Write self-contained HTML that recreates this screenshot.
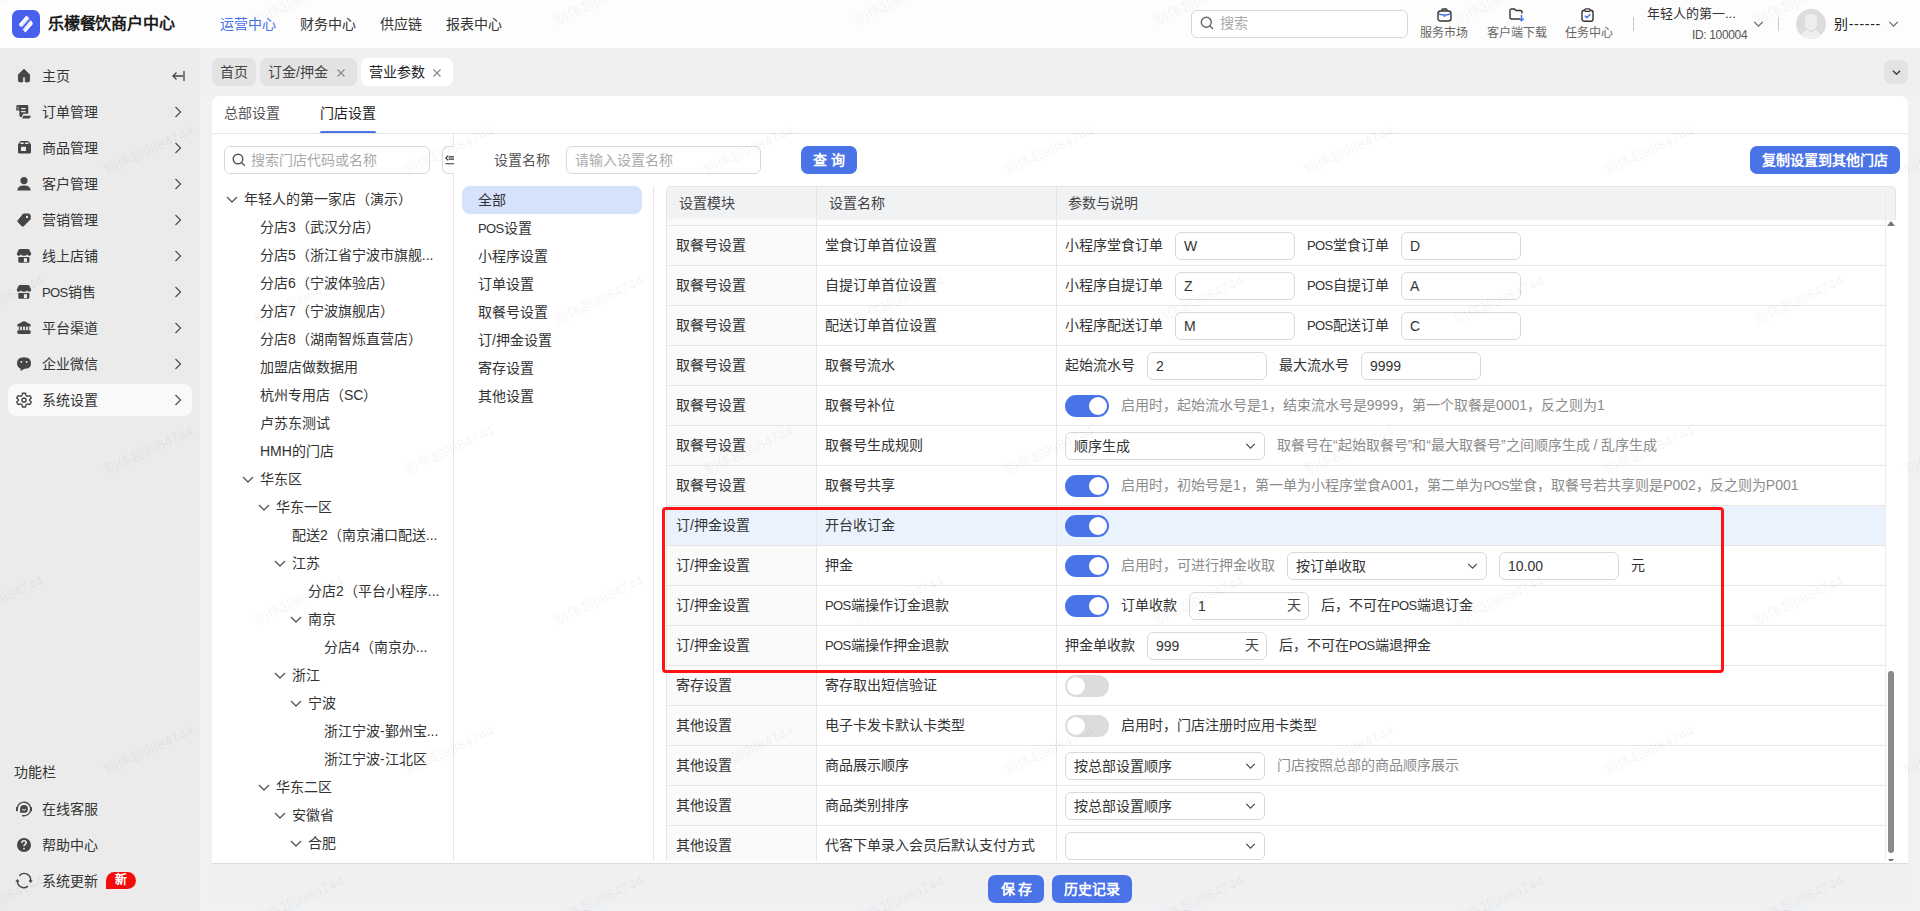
<!DOCTYPE html><html lang="zh-CN"><head><meta charset="utf-8"><style>
*{box-sizing:border-box;margin:0;padding:0}
svg{display:block}
html,body{width:1920px;height:911px;overflow:hidden}
body{position:relative;background:#f0f1f3;font-family:"Liberation Sans",sans-serif;font-size:14px;color:#333;}
.abs{position:absolute}
.t{position:absolute;white-space:nowrap;line-height:20px}
#hdr{position:absolute;left:0;top:0;width:1920px;height:48px;background:#fdfdfd}
#side{position:absolute;left:0;top:48px;width:200px;height:863px;background:#ebebeb}
.sitem{position:absolute;left:0;width:200px;height:32px}
.sitem .ic{position:absolute;left:16px;top:8px;width:16px;height:16px}
.sitem .tx{position:absolute;left:42px;top:6px;line-height:20px;font-size:14px;color:#333;font-weight:500}
.sitem .ch{position:absolute;left:174px;top:10px}
#card{position:absolute;left:212px;top:96px;width:1696px;height:767px;background:#fff;border-radius:8px 8px 0 0;overflow:hidden}
.inp{position:absolute;height:28px;border:1px solid #d9d9d9;border-radius:6px;background:#fff;font-size:14px;line-height:26px;padding-left:8px;color:#333}
.btn{position:absolute;height:28px;border-radius:7px;background:#4a73e8;color:#fff;font-size:14px;line-height:28px;text-align:center;font-weight:700}
.tw{position:absolute;left:0;width:44px;height:22px;border-radius:11px;background:#4a73e8}
.tw::after{content:"";position:absolute;left:24px;top:2px;width:18px;height:18px;border-radius:50%;background:#fff}
.tw.off{background:#dcdcdc}
.tw.off::after{left:2px}
.row{position:absolute;left:0;width:1219px;height:40px;border-bottom:1px solid #e8e8e8}
.c1{position:absolute;left:0;top:0;width:150px;height:40px;background:#fafafa;border-right:1px solid #e8e8e8}
.c2{position:absolute;left:150px;top:0;width:240px;height:40px;border-right:1px solid #e8e8e8}
.ctx{position:absolute;top:9px;line-height:20px;white-space:nowrap;color:#333}
.gray{color:#8c8c8c}
.tree{position:absolute;white-space:nowrap;line-height:20px;color:#333}
.cat{position:absolute;left:16px;line-height:20px;color:#333}
.wm{position:absolute;white-space:nowrap;font-size:14px;line-height:16px;font-weight:500;color:rgba(0,0,0,0.06);transform:translate(-50%,-50%) rotate(-25deg);pointer-events:none;z-index:50}

</style></head><body>
<div id="hdr">
<svg class="abs" style="left:12px;top:10px" width="28" height="28" viewBox="0 0 28 28"><rect width="28" height="28" rx="6.5" fill="#4761ee"/><defs><linearGradient id="lg1" x1="0" y1="0" x2="1" y2="1"><stop offset="0.45" stop-color="#fff"/><stop offset="1" stop-color="#fff" stop-opacity="0.2"/></linearGradient><linearGradient id="lg2" x1="1" y1="1" x2="0" y2="0"><stop offset="0.45" stop-color="#fff"/><stop offset="1" stop-color="#fff" stop-opacity="0.2"/></linearGradient></defs><path d="M14.4 5.4 L17.6 8.6 L10 17.3 Q7.4 16.6 6.9 14.3 Z" fill="url(#lg1)"/><path d="M18.4 10 Q20.6 11.6 20.9 14 L13.4 22.6 L10.6 19.6 Z" fill="url(#lg2)"/></svg>
<div class="t" style="left:48px;top:14px;font-size:16px;font-weight:700;color:#1a1a1a;letter-spacing:-0.2px">乐檬餐饮商户中心</div>
<div class="t" style="left:220px;top:14px;color:#4a73e8;font-weight:500">运营中心</div>
<div class="t" style="left:300px;top:14px;color:#333;font-weight:500">财务中心</div>
<div class="t" style="left:380px;top:14px;color:#333;font-weight:500">供应链</div>
<div class="t" style="left:446px;top:14px;color:#333;font-weight:500">报表中心</div>
<div class="abs" style="left:1191px;top:10px;width:217px;height:28px;border:1px solid #d9d9d9;border-radius:6px;background:#fff"></div>
<svg class="abs" style="left:1200px;top:16px" width="14" height="14" viewBox="0 0 14 14"><circle cx="6.3" cy="6.3" r="5" fill="none" stroke="#666" stroke-width="1.4"/><path d="M9.8 9.8 L13 13" stroke="#666" stroke-width="1.5"/></svg>
<div class="t" style="left:1220px;top:13px;color:#aaa">搜索</div>
<svg class="abs" style="left:1437px;top:8px" width="15" height="14" viewBox="0 0 15 14"><rect x="1" y="3" width="13" height="10" rx="2.5" fill="none" stroke="#333" stroke-width="1.4"/><path d="M5 3 V2 Q5 1 6 1 H9 Q10 1 10 2 V3" fill="none" stroke="#333" stroke-width="1.4"/><path d="M2 6 Q7.5 8 13 6" fill="none" stroke="#4a73e8" stroke-width="1.5"/><path d="M7.5 7 V9" stroke="#4a73e8" stroke-width="1.5"/></svg>
<div class="t" style="left:1420px;top:23px;font-size:12px;color:#666">服务市场</div>
<svg class="abs" style="left:1509px;top:8px" width="16" height="14" viewBox="0 0 16 14"><path d="M11 11 H2.5 Q1 11 1 9.5 V2.5 Q1 1 2.5 1 H5.5 L7 2.5 H11.5 Q13 2.5 13 4 V5.5" fill="none" stroke="#333" stroke-width="1.4"/><path d="M12.5 7 V12.5 M10.3 10.5 L12.5 12.7 L14.7 10.5" fill="none" stroke="#4a73e8" stroke-width="1.5"/></svg>
<div class="t" style="left:1487px;top:23px;font-size:12px;color:#666">客户端下载</div>
<svg class="abs" style="left:1581px;top:8px" width="13" height="14" viewBox="0 0 13 14"><rect x="1" y="2.3" width="11" height="11" rx="2.3" fill="none" stroke="#333" stroke-width="1.4"/><rect x="3.8" y="0.8" width="5.4" height="2.6" rx="1.2" fill="#fff" stroke="#333" stroke-width="1.3"/><path d="M3.8 7.8 L5.8 9.6 L9.3 6.2" fill="none" stroke="#4a73e8" stroke-width="1.5"/></svg>
<div class="t" style="left:1565px;top:23px;font-size:12px;color:#666">任务中心</div>
<div class="abs" style="left:1633px;top:17px;width:1px;height:14px;background:#ccc"></div>
<div class="t" style="left:1647px;top:4px;font-size:13px;color:#333">年轻人的第一...</div>
<div class="t" style="left:1692px;top:25px;font-size:12px;color:#555;letter-spacing:-0.35px">ID: 100004</div>
<div class="abs" style="left:1753px;top:21px"><svg width="11" height="6" viewBox="0 0 12 7"><path d="M1 1 L6 6 L11 1" fill="none" stroke="#666" stroke-width="1.3"/></svg></div>
<div class="abs" style="left:1778px;top:17px;width:1px;height:14px;background:#ccc"></div>
<svg class="abs" style="left:1796px;top:9px" width="30" height="30" viewBox="0 0 30 30"><circle cx="15" cy="15" r="15" fill="#dcdcdc"/><path d="M9 9 Q9 5 15 5 Q21 5 21 9 V15 Q21 21 15 21 Q9 21 9 15 Z" fill="#eeeeee"/><path d="M5 26 Q8 21 12 21 L15 24 L18 21 Q22 21 25 26 Q20 30 15 30 Q10 30 5 26 Z" fill="#eeeeee"/></svg>
<div class="t" style="left:1834px;top:14px;color:#222;letter-spacing:0.7px">别------</div>
<div class="abs" style="left:1888px;top:21px"><svg width="11" height="6" viewBox="0 0 12 7"><path d="M1 1 L6 6 L11 1" fill="none" stroke="#666" stroke-width="1.3"/></svg></div>
</div>
<div id="side">
<div class="sitem" style="top:12px;">
<svg class="abs" style="left:12px;top:4px" width="24" height="24" viewBox="0 0 24 24"><path d="M12 5.2 L17.6 10.5 V16.4 Q17.6 17.9 16.1 17.9 H13.2 V13.4 Q13.2 12.9 12.7 12.9 H11.3 Q10.8 12.9 10.8 13.4 V17.9 H7.9 Q6.4 17.9 6.4 16.4 V10.5 Z" fill="#454545" stroke="#454545" stroke-width="0.8" stroke-linejoin="round"/></svg>
<div class="tx" style="left:42px">主页</div>
<svg class="abs" style="left:171px;top:9px" width="14" height="14" viewBox="0 0 14 14"><path d="M13 2 V12 M12 7 H2 M5.5 3.5 L2 7 L5.5 10.5" fill="none" stroke="#444" stroke-width="1.3"/></svg>
</div>
<div class="sitem" style="top:48px;">
<svg class="abs" style="left:12px;top:4px" width="24" height="24" viewBox="0 0 24 24"><path d="M5.6 5 H15 Q16.3 5 16.3 6.3 V13.7 H11.2 L9.6 17.2 Q7.4 17.2 7.4 15.2 V10.6 H4.3 V6.3 Q4.3 5 5.6 5 Z" fill="#454545"/><rect x="5.4" y="6.3" width="1.3" height="3.2" fill="#9a9a9a"/><rect x="9" y="7.9" width="4.7" height="1.3" rx="0.6" fill="#ebebeb"/><rect x="9" y="11" width="4.7" height="1.3" rx="0.6" fill="#ebebeb"/><path d="M11.4 15.8 H19 L18.2 17.6 Q17.9 18.4 17 18.4 H10.2 Z" fill="#454545"/></svg>
<div class="tx" style="left:42px">订单管理</div>
<div class="ch" style="left:174px"><svg width="8" height="12" viewBox="0 0 8 12"><path d="M1.5 1 L6.5 6 L1.5 11" fill="none" stroke="#555" stroke-width="1.3"/></svg></div>
</div>
<div class="sitem" style="top:84px;">
<svg class="abs" style="left:12px;top:4px" width="24" height="24" viewBox="0 0 24 24"><path d="M8.6 5 H15.4 Q16.4 5 17 6 L19 8.2 V16.1 Q19 17.6 17.5 17.6 H7.5 Q6 17.6 6 16.1 V8.2 L7.9 6 Q8.3 5 8.6 5 Z" fill="#454545"/><rect x="8.2" y="6.5" width="3.7" height="1.4" rx="0.7" fill="#ebebeb"/><rect x="12.9" y="6.5" width="3.7" height="1.4" rx="0.7" fill="#ebebeb"/><rect x="9" y="10.8" width="5" height="4.2" rx="0.6" fill="#ebebeb"/></svg>
<div class="tx" style="left:42px">商品管理</div>
<div class="ch" style="left:174px"><svg width="8" height="12" viewBox="0 0 8 12"><path d="M1.5 1 L6.5 6 L1.5 11" fill="none" stroke="#555" stroke-width="1.3"/></svg></div>
</div>
<div class="sitem" style="top:120px;">
<svg class="abs" style="left:12px;top:4px" width="24" height="24" viewBox="0 0 24 24"><circle cx="12" cy="8.6" r="3.6" fill="#454545"/><path d="M5.4 18.6 Q5.4 13.4 12 13.4 Q18.6 13.4 18.6 18.6 Z" fill="#454545"/></svg>
<div class="tx" style="left:42px">客户管理</div>
<div class="ch" style="left:174px"><svg width="8" height="12" viewBox="0 0 8 12"><path d="M1.5 1 L6.5 6 L1.5 11" fill="none" stroke="#555" stroke-width="1.3"/></svg></div>
</div>
<div class="sitem" style="top:156px;">
<svg class="abs" style="left:12px;top:4px" width="24" height="24" viewBox="0 0 24 24"><path d="M11.3 6 H16.5 Q18.2 6 18.2 7.7 V11.2 L11.6 17.9 Q10.8 18.6 10 17.9 L6.2 14.1 Q5.4 13.3 6.1 12.5 Z" fill="#454545" stroke="#454545" stroke-width="1" stroke-linejoin="round"/><rect x="14" y="7.9" width="2" height="2.1" fill="#ebebeb"/></svg>
<div class="tx" style="left:42px">营销管理</div>
<div class="ch" style="left:174px"><svg width="8" height="12" viewBox="0 0 8 12"><path d="M1.5 1 L6.5 6 L1.5 11" fill="none" stroke="#555" stroke-width="1.3"/></svg></div>
</div>
<div class="sitem" style="top:192px;">
<svg class="abs" style="left:12px;top:4px" width="24" height="24" viewBox="0 0 24 24"><path d="M8 5 H16 Q17 5 17.5 6 L19.2 9.8 Q19.3 11.7 17.4 11.7 Q15.6 11.7 15.1 10.2 Q14.5 11.7 12 11.7 Q9.5 11.7 8.9 10.2 Q8.4 11.7 6.6 11.7 Q4.7 11.7 4.8 9.8 L6.5 6 Q7 5 8 5 Z" fill="#454545"/><path d="M6.3 12.9 H17.4 V17.2 Q17.4 18.7 15.9 18.7 H7.8 Q6.3 18.7 6.3 17.2 Z" fill="#454545"/><rect x="11.9" y="14.2" width="3.1" height="3.9" fill="#ebebeb"/></svg>
<div class="tx" style="left:42px">线上店铺</div>
<div class="ch" style="left:174px"><svg width="8" height="12" viewBox="0 0 8 12"><path d="M1.5 1 L6.5 6 L1.5 11" fill="none" stroke="#555" stroke-width="1.3"/></svg></div>
</div>
<div class="sitem" style="top:228px;">
<svg class="abs" style="left:12px;top:4px" width="24" height="24" viewBox="0 0 24 24"><path d="M8 5 H16 Q17 5 17.5 6 L19.2 9.8 Q19.3 11.7 17.4 11.7 Q15.6 11.7 15.1 10.2 Q14.5 11.7 12 11.7 Q9.5 11.7 8.9 10.2 Q8.4 11.7 6.6 11.7 Q4.7 11.7 4.8 9.8 L6.5 6 Q7 5 8 5 Z" fill="#454545"/><path d="M6.3 12.9 H17.4 V17.2 Q17.4 18.7 15.9 18.7 H7.8 Q6.3 18.7 6.3 17.2 Z" fill="#454545"/><rect x="11.9" y="14.2" width="3.1" height="3.9" fill="#ebebeb"/></svg>
<div class="tx" style="left:42px"><span style="font-size:13px;letter-spacing:-0.6px">POS</span>销售</div>
<div class="ch" style="left:174px"><svg width="8" height="12" viewBox="0 0 8 12"><path d="M1.5 1 L6.5 6 L1.5 11" fill="none" stroke="#555" stroke-width="1.3"/></svg></div>
</div>
<div class="sitem" style="top:264px;">
<svg class="abs" style="left:12px;top:4px" width="24" height="24" viewBox="0 0 24 24"><path d="M12 5 L18.3 8.3 Q18.6 8.5 18.6 9 V10.6 H5.4 V9 Q5.4 8.5 5.7 8.3 Z" fill="#454545"/><rect x="6.9" y="10.4" width="10.2" height="4" fill="#454545"/><rect x="7.9" y="10.9" width="2.1" height="3.3" fill="#dcdcdc"/><rect x="11" y="10.9" width="2.1" height="3.3" fill="#dcdcdc"/><rect x="14" y="10.9" width="2.1" height="3.3" fill="#dcdcdc"/><rect x="5.3" y="14.2" width="13.4" height="3.7" rx="1.4" fill="#454545"/></svg>
<div class="tx" style="left:42px">平台渠道</div>
<div class="ch" style="left:174px"><svg width="8" height="12" viewBox="0 0 8 12"><path d="M1.5 1 L6.5 6 L1.5 11" fill="none" stroke="#555" stroke-width="1.3"/></svg></div>
</div>
<div class="sitem" style="top:300px;">
<svg class="abs" style="left:12px;top:4px" width="24" height="24" viewBox="0 0 24 24"><path d="M12 5.2 Q19 5.2 19 11.2 Q19 16.8 12.5 16.8 L8.6 18.9 L8.5 16.4 Q5 15.3 5 11.2 Q5 5.2 12 5.2 Z" fill="#454545"/><circle cx="9.4" cy="10" r="0.9" fill="#ebebeb"/><circle cx="14.6" cy="10" r="0.9" fill="#ebebeb"/></svg>
<div class="tx" style="left:42px">企业微信</div>
<div class="ch" style="left:174px"><svg width="8" height="12" viewBox="0 0 8 12"><path d="M1.5 1 L6.5 6 L1.5 11" fill="none" stroke="#555" stroke-width="1.3"/></svg></div>
</div>
<div class="sitem" style="top:336px;background:#f9f9f9;border-radius:8px;left:8px;width:184px;">
<svg class="abs" style="left:4px;top:4px" width="24" height="24" viewBox="0 0 24 24"><path d="M10.6 5.2 H13.4 L13.9 7.4 L15.7 8.4 L17.9 7.7 L19.3 10.1 L17.6 11.6 V12.6 L19.3 14.1 L17.9 16.5 L15.7 15.8 L13.9 16.8 L13.4 19 H10.6 L10.1 16.8 L8.3 15.8 L6.1 16.5 L4.7 14.1 L6.4 12.6 V11.6 L4.7 10.1 L6.1 7.7 L8.3 8.4 L10.1 7.4 Z" fill="none" stroke="#454545" stroke-width="1.4" stroke-linejoin="round"/><circle cx="12" cy="12.1" r="2.1" fill="none" stroke="#454545" stroke-width="1.4"/></svg>
<div class="tx" style="left:34px">系统设置</div>
<div class="ch" style="left:166px"><svg width="8" height="12" viewBox="0 0 8 12"><path d="M1.5 1 L6.5 6 L1.5 11" fill="none" stroke="#555" stroke-width="1.3"/></svg></div>
</div>
<div class="t" style="left:14px;top:714px;color:#333;font-weight:500">功能栏</div>
<div class="sitem" style="top:745px">
<svg class="abs" style="left:12px;top:4px" width="24" height="24" viewBox="0 0 24 24"><path d="M5.2 11.2 A6.8 6.8 0 1 1 10.2 18.5" fill="none" stroke="#454545" stroke-width="1.4"/><rect x="4" y="10" width="1.9" height="4.2" rx="0.6" fill="#454545"/><rect x="18.1" y="10" width="1.9" height="4.2" rx="0.6" fill="#454545"/><path d="M12 8 A3.9 3.9 0 1 1 12 15.8 H8.1 V11.9 A3.9 3.9 0 0 1 12 8 Z" fill="#454545"/><path d="M10.2 12 Q12 14.3 13.8 12" fill="none" stroke="#ebebeb" stroke-width="1.2"/></svg>
<div class="tx">在线客服</div>
</div>
<div class="sitem" style="top:781px">
<svg class="abs" style="left:12px;top:4px" width="24" height="24" viewBox="0 0 24 24"><circle cx="12" cy="12" r="7" fill="#454545"/><path d="M9.8 10 Q9.8 7.8 12 7.8 Q14.2 7.8 14.2 9.8 Q14.2 11 12.8 11.6 Q12 12 12 13.3" fill="none" stroke="#ebebeb" stroke-width="1.6"/><circle cx="12" cy="15.6" r="0.95" fill="#ebebeb"/></svg>
<div class="tx">帮助中心</div>
</div>
<div class="sitem" style="top:817px">
<svg class="abs" style="left:12px;top:4px" width="24" height="24" viewBox="0 0 24 24"><path d="M7.6 6.6 A6.3 6.3 0 0 1 18.5 11.8" fill="none" stroke="#454545" stroke-width="1.4" stroke-linecap="round"/><path d="M17 11.6 L18.6 13.7 L20.2 11.6 Z" fill="#454545" stroke="#454545" stroke-width="0.6" stroke-linejoin="round"/><path d="M15.6 17.4 A6.3 6.3 0 0 1 5.5 12.2" fill="none" stroke="#454545" stroke-width="1.4" stroke-linecap="round"/><path d="M3.8 12.4 L5.4 10.3 L7 12.4 Z" fill="#454545" stroke="#454545" stroke-width="0.6" stroke-linejoin="round"/></svg>
<div class="tx">系统更新</div>
<div class="abs" style="left:106px;top:7px;width:30px;height:17px;background:#f20d0d;border-radius:9px 9px 9px 0;color:#fff;font-size:12px;line-height:17px;text-align:center;font-weight:700">新</div>
</div>
</div>
<div class="abs" style="left:200px;top:48px;width:1720px;height:48px;background:#f0f0f0"></div>
<div class="abs" style="left:212px;top:58px;width:44px;height:28px;background:#e3e3e3;border-radius:7px"></div>
<div class="t" style="left:220px;top:62px;color:#444">首页</div>
<div class="abs" style="left:260px;top:58px;width:97px;height:28px;background:#e3e3e3;border-radius:7px"></div>
<div class="t" style="left:268px;top:62px;color:#444">订金/押金</div>
<div class="abs" style="left:336px;top:68px"><svg width="10" height="10" viewBox="0 0 10 10"><path d="M1.5 1.5 L8.5 8.5 M8.5 1.5 L1.5 8.5" stroke="#888" stroke-width="1.2"/></svg></div>
<div class="abs" style="left:361px;top:58px;width:92px;height:28px;background:#fff;border-radius:7px"></div>
<div class="t" style="left:369px;top:62px;color:#222">营业参数</div>
<div class="abs" style="left:432px;top:68px"><svg width="10" height="10" viewBox="0 0 10 10"><path d="M1.5 1.5 L8.5 8.5 M8.5 1.5 L1.5 8.5" stroke="#888" stroke-width="1.2"/></svg></div>
<div class="abs" style="left:1884px;top:60px;width:24px;height:24px;background:#e3e3e3;border-radius:6px"></div>
<div class="abs" style="left:1892px;top:70px"><svg width="9" height="5" viewBox="0 0 12 7"><path d="M1 1 L6 6 L11 1" fill="none" stroke="#333" stroke-width="1.7"/></svg></div>
<div id="card"><div class="abs" style="left:0;top:-1px;width:1696px;height:768px">
<div class="t" style="left:12px;top:8px;color:#555">总部设置</div>
<div class="t" style="left:108px;top:8px;color:#222;font-weight:500">门店设置</div>
<div class="abs" style="left:108px;top:36px;width:56px;height:3px;background:#4a73e8;border-radius:2px"></div>
<div class="abs" style="left:0;top:38px;width:1696px;height:1px;background:#e6e6e6"></div>
<div class="abs" style="left:241px;top:39px;width:1px;height:727px;background:#e6e6e6"></div>
<div class="inp" style="left:12px;top:51px;width:206px"></div>
<svg class="abs" style="left:20px;top:58px" width="14" height="14" viewBox="0 0 14 14"><circle cx="6" cy="6" r="4.8" fill="none" stroke="#555" stroke-width="1.4"/><path d="M9.5 9.5 L12.8 12.8" stroke="#555" stroke-width="1.4"/></svg>
<div class="t" style="left:39px;top:55px;color:#aaa">搜索门店代码或名称</div>
<div class="abs" style="left:230px;top:51px;width:12px;height:28px;border:1px solid #dcdcdc;border-right:none;border-radius:6px 0 0 6px;background:#fff"></div>
<svg class="abs" style="left:233px;top:60px" width="9" height="10" viewBox="0 0 9 10"><path d="M3.2 0.6 L0.8 3 L3.2 5.4" fill="none" stroke="#333" stroke-width="1.1"/><path d="M3.6 1.9 H9 M3.6 4.1 H9 M0.5 8.7 H9" stroke="#333" stroke-width="1.1"/></svg>
<div class="abs" style="left:14px;top:101px"><svg width="12" height="7" viewBox="0 0 12 7"><path d="M1 1 L6 6 L11 1" fill="none" stroke="#555" stroke-width="1.3"/></svg></div>
<div class="tree" style="left:32px;top:94px">年轻人的第一家店（演示）</div>
<div class="tree" style="left:48px;top:122px">分店3（武汉分店）</div>
<div class="tree" style="left:48px;top:150px">分店5（浙江省宁波市旗舰...</div>
<div class="tree" style="left:48px;top:178px">分店6（宁波体验店）</div>
<div class="tree" style="left:48px;top:206px">分店7（宁波旗舰店）</div>
<div class="tree" style="left:48px;top:234px">分店8（湖南智烁直营店）</div>
<div class="tree" style="left:48px;top:262px">加盟店做数据用</div>
<div class="tree" style="left:48px;top:290px">杭州专用店（SC）</div>
<div class="tree" style="left:48px;top:318px">卢苏东测试</div>
<div class="tree" style="left:48px;top:346px">HMH的门店</div>
<div class="abs" style="left:30px;top:381px"><svg width="12" height="7" viewBox="0 0 12 7"><path d="M1 1 L6 6 L11 1" fill="none" stroke="#555" stroke-width="1.3"/></svg></div>
<div class="tree" style="left:48px;top:374px">华东区</div>
<div class="abs" style="left:46px;top:409px"><svg width="12" height="7" viewBox="0 0 12 7"><path d="M1 1 L6 6 L11 1" fill="none" stroke="#555" stroke-width="1.3"/></svg></div>
<div class="tree" style="left:64px;top:402px">华东一区</div>
<div class="tree" style="left:80px;top:430px">配送2（南京浦口配送...</div>
<div class="abs" style="left:62px;top:465px"><svg width="12" height="7" viewBox="0 0 12 7"><path d="M1 1 L6 6 L11 1" fill="none" stroke="#555" stroke-width="1.3"/></svg></div>
<div class="tree" style="left:80px;top:458px">江苏</div>
<div class="tree" style="left:96px;top:486px">分店2（平台小程序...</div>
<div class="abs" style="left:78px;top:521px"><svg width="12" height="7" viewBox="0 0 12 7"><path d="M1 1 L6 6 L11 1" fill="none" stroke="#555" stroke-width="1.3"/></svg></div>
<div class="tree" style="left:96px;top:514px">南京</div>
<div class="tree" style="left:112px;top:542px">分店4（南京办...</div>
<div class="abs" style="left:62px;top:577px"><svg width="12" height="7" viewBox="0 0 12 7"><path d="M1 1 L6 6 L11 1" fill="none" stroke="#555" stroke-width="1.3"/></svg></div>
<div class="tree" style="left:80px;top:570px">浙江</div>
<div class="abs" style="left:78px;top:605px"><svg width="12" height="7" viewBox="0 0 12 7"><path d="M1 1 L6 6 L11 1" fill="none" stroke="#555" stroke-width="1.3"/></svg></div>
<div class="tree" style="left:96px;top:598px">宁波</div>
<div class="tree" style="left:112px;top:626px">浙江宁波-鄞州宝...</div>
<div class="tree" style="left:112px;top:654px">浙江宁波-江北区</div>
<div class="abs" style="left:46px;top:689px"><svg width="12" height="7" viewBox="0 0 12 7"><path d="M1 1 L6 6 L11 1" fill="none" stroke="#555" stroke-width="1.3"/></svg></div>
<div class="tree" style="left:64px;top:682px">华东二区</div>
<div class="abs" style="left:62px;top:717px"><svg width="12" height="7" viewBox="0 0 12 7"><path d="M1 1 L6 6 L11 1" fill="none" stroke="#555" stroke-width="1.3"/></svg></div>
<div class="tree" style="left:80px;top:710px">安徽省</div>
<div class="abs" style="left:78px;top:745px"><svg width="12" height="7" viewBox="0 0 12 7"><path d="M1 1 L6 6 L11 1" fill="none" stroke="#555" stroke-width="1.3"/></svg></div>
<div class="tree" style="left:96px;top:738px">合肥</div>
<div class="t" style="left:282px;top:55px;color:#555">设置名称</div>
<div class="inp" style="left:354px;top:51px;width:195px"></div>
<div class="t" style="left:363px;top:55px;color:#aaa">请输入设置名称</div>
<div class="btn" style="left:589px;top:51px;width:56px;letter-spacing:0px">查 询</div>
<div class="btn" style="left:1538px;top:51px;width:150px">复制设置到其他门店</div>
<div class="abs" style="left:441px;top:91px;width:1px;height:675px;background:#e6e6e6"></div>
<div class="abs" style="left:250px;top:91px;width:180px;height:28px;background:#d6e1fb;border-radius:8px"></div>
<div class="t" style="left:266px;top:95px;color:#333">全部</div>
<div class="t" style="left:266px;top:123px;color:#333"><span style="font-size:13px;letter-spacing:-0.6px">POS</span>设置</div>
<div class="t" style="left:266px;top:151px;color:#333">小程序设置</div>
<div class="t" style="left:266px;top:179px;color:#333">订单设置</div>
<div class="t" style="left:266px;top:207px;color:#333">取餐号设置</div>
<div class="t" style="left:266px;top:235px;color:#333">订/押金设置</div>
<div class="t" style="left:266px;top:263px;color:#333">寄存设置</div>
<div class="t" style="left:266px;top:291px;color:#333">其他设置</div>
</div></div>
<div class="abs" style="left:666px;top:186px;width:1230px;height:675px;overflow:hidden">
<div class="abs" style="left:0;top:0;width:1230px;height:34px;border:1px solid #e6e6e6;border-bottom:none;border-radius:5px 5px 0 0;background:#f1f2f4"></div>
<div class="abs" style="left:0;top:33px;width:1px;height:642px;background:#e6e6e6"></div>
<div class="abs" style="left:150px;top:1px;width:1px;height:32px;background:#e6e6e6"></div>
<div class="abs" style="left:390px;top:1px;width:1px;height:32px;background:#e6e6e6"></div>
<div class="abs" style="left:1219px;top:1px;width:1px;height:674px;background:#ececec"></div>
<div class="t" style="left:13px;top:7px;color:#444;font-weight:500">设置模块</div>
<div class="t" style="left:163px;top:7px;color:#444;font-weight:500">设置名称</div>
<div class="t" style="left:402px;top:7px;color:#444;font-weight:500">参数与说明</div>
<div class="abs" style="left:1px;top:33px;width:149px;height:6px;background:#fafafa"></div>
<div class="abs" style="left:150px;top:33px;width:1px;height:6px;background:#e6e6e6"></div>
<div class="abs" style="left:390px;top:33px;width:1px;height:6px;background:#e6e6e6"></div>
<svg class="abs" style="left:1221px;top:35px" width="8" height="5" viewBox="0 0 8 5"><path d="M0 5 L4 0 L8 5 Z" fill="#777"/></svg>
<div class="abs" style="left:1222px;top:485px;width:6px;height:182px;background:#8a8a8a;border-radius:3px"></div>
<svg class="abs" style="left:1222px;top:673px" width="6" height="4" viewBox="0 0 6 4"><path d="M0 0 L3 4 L6 0 Z" fill="#777"/></svg>
<div class="abs" style="left:1px;top:39px;width:1218px;height:1px;background:#e6e6e6"></div>
<div class="abs" style="left:1px;top:40px;width:1218px;height:39px;">
<div class="abs" style="left:0;top:0;width:149px;height:39px;background:#fafafa;"></div>
<div class="abs" style="left:149px;top:-1px;width:1px;height:41px;background:#e6e6e6"></div>
<div class="abs" style="left:389px;top:-1px;width:1px;height:41px;background:#e6e6e6"></div>
<div class="ctx" style="left:9px;top:9px">取餐号设置</div>
<div class="ctx" style="left:158px;top:9px">堂食订单首位设置</div>
<div class="abs" style="left:-1px;top:0px;width:1220px;height:40px"><div class="ctx " style="left:399px">小程序堂食订单</div><div class="inp" style="left:509px;top:6px;width:120px">W</div><div class="ctx " style="left:641px"><span style="font-size:13px;letter-spacing:-0.6px">POS</span>堂食订单</div><div class="inp" style="left:735px;top:6px;width:120px">D</div></div>
</div>
<div class="abs" style="left:1px;top:79px;width:1218px;height:1px;background:#e6e6e6"></div>
<div class="abs" style="left:1px;top:80px;width:1218px;height:39px;">
<div class="abs" style="left:0;top:0;width:149px;height:39px;background:#fafafa;"></div>
<div class="abs" style="left:149px;top:-1px;width:1px;height:41px;background:#e6e6e6"></div>
<div class="abs" style="left:389px;top:-1px;width:1px;height:41px;background:#e6e6e6"></div>
<div class="ctx" style="left:9px;top:9px">取餐号设置</div>
<div class="ctx" style="left:158px;top:9px">自提订单首位设置</div>
<div class="abs" style="left:-1px;top:0px;width:1220px;height:40px"><div class="ctx " style="left:399px">小程序自提订单</div><div class="inp" style="left:509px;top:6px;width:120px">Z</div><div class="ctx " style="left:641px"><span style="font-size:13px;letter-spacing:-0.6px">POS</span>自提订单</div><div class="inp" style="left:735px;top:6px;width:120px">A</div></div>
</div>
<div class="abs" style="left:1px;top:119px;width:1218px;height:1px;background:#e6e6e6"></div>
<div class="abs" style="left:1px;top:120px;width:1218px;height:39px;">
<div class="abs" style="left:0;top:0;width:149px;height:39px;background:#fafafa;"></div>
<div class="abs" style="left:149px;top:-1px;width:1px;height:41px;background:#e6e6e6"></div>
<div class="abs" style="left:389px;top:-1px;width:1px;height:41px;background:#e6e6e6"></div>
<div class="ctx" style="left:9px;top:9px">取餐号设置</div>
<div class="ctx" style="left:158px;top:9px">配送订单首位设置</div>
<div class="abs" style="left:-1px;top:0px;width:1220px;height:40px"><div class="ctx " style="left:399px">小程序配送订单</div><div class="inp" style="left:509px;top:6px;width:120px">M</div><div class="ctx " style="left:641px"><span style="font-size:13px;letter-spacing:-0.6px">POS</span>配送订单</div><div class="inp" style="left:735px;top:6px;width:120px">C</div></div>
</div>
<div class="abs" style="left:1px;top:159px;width:1218px;height:1px;background:#e6e6e6"></div>
<div class="abs" style="left:1px;top:160px;width:1218px;height:39px;">
<div class="abs" style="left:0;top:0;width:149px;height:39px;background:#fafafa;"></div>
<div class="abs" style="left:149px;top:-1px;width:1px;height:41px;background:#e6e6e6"></div>
<div class="abs" style="left:389px;top:-1px;width:1px;height:41px;background:#e6e6e6"></div>
<div class="ctx" style="left:9px;top:9px">取餐号设置</div>
<div class="ctx" style="left:158px;top:9px">取餐号流水</div>
<div class="abs" style="left:-1px;top:0px;width:1220px;height:40px"><div class="ctx " style="left:399px">起始流水号</div><div class="inp" style="left:481px;top:6px;width:120px">2</div><div class="ctx " style="left:613px">最大流水号</div><div class="inp" style="left:695px;top:6px;width:120px">9999</div></div>
</div>
<div class="abs" style="left:1px;top:199px;width:1218px;height:1px;background:#e6e6e6"></div>
<div class="abs" style="left:1px;top:200px;width:1218px;height:39px;">
<div class="abs" style="left:0;top:0;width:149px;height:39px;background:#fafafa;"></div>
<div class="abs" style="left:149px;top:-1px;width:1px;height:41px;background:#e6e6e6"></div>
<div class="abs" style="left:389px;top:-1px;width:1px;height:41px;background:#e6e6e6"></div>
<div class="ctx" style="left:9px;top:9px">取餐号设置</div>
<div class="ctx" style="left:158px;top:9px">取餐号补位</div>
<div class="abs" style="left:-1px;top:0px;width:1220px;height:40px"><div class="tw" style="left:399px;top:9px"></div><div class="ctx gray" style="left:455px">启用时，起始流水号是1，结束流水号是9999，第一个取餐是0001，反之则为1</div></div>
</div>
<div class="abs" style="left:1px;top:239px;width:1218px;height:1px;background:#e6e6e6"></div>
<div class="abs" style="left:1px;top:240px;width:1218px;height:39px;">
<div class="abs" style="left:0;top:0;width:149px;height:39px;background:#fafafa;"></div>
<div class="abs" style="left:149px;top:-1px;width:1px;height:41px;background:#e6e6e6"></div>
<div class="abs" style="left:389px;top:-1px;width:1px;height:41px;background:#e6e6e6"></div>
<div class="ctx" style="left:9px;top:9px">取餐号设置</div>
<div class="ctx" style="left:158px;top:9px">取餐号生成规则</div>
<div class="abs" style="left:-1px;top:0px;width:1220px;height:40px"><div class="inp" style="left:399px;top:6px;width:200px">顺序生成</div><div class="abs" style="left:579px;top:17px"><svg width="11" height="6" viewBox="0 0 12 7"><path d="M1 1 L6 6 L11 1" fill="none" stroke="#444" stroke-width="1.3"/></svg></div><div class="ctx gray" style="left:611px">取餐号在“起始取餐号”和“最大取餐号”之间顺序生成 / 乱序生成</div></div>
</div>
<div class="abs" style="left:1px;top:279px;width:1218px;height:1px;background:#e6e6e6"></div>
<div class="abs" style="left:1px;top:280px;width:1218px;height:39px;">
<div class="abs" style="left:0;top:0;width:149px;height:39px;background:#fafafa;"></div>
<div class="abs" style="left:149px;top:-1px;width:1px;height:41px;background:#e6e6e6"></div>
<div class="abs" style="left:389px;top:-1px;width:1px;height:41px;background:#e6e6e6"></div>
<div class="ctx" style="left:9px;top:9px">取餐号设置</div>
<div class="ctx" style="left:158px;top:9px">取餐号共享</div>
<div class="abs" style="left:-1px;top:0px;width:1220px;height:40px"><div class="tw" style="left:399px;top:9px"></div><div class="ctx gray" style="left:455px">启用时，初始号是1，第一单为小程序堂食A001，第二单为<span style="font-size:13px;letter-spacing:-0.6px">POS</span>堂食，取餐号若共享则是P002，反之则为P001</div></div>
</div>
<div class="abs" style="left:1px;top:319px;width:1218px;height:1px;background:#e6e6e6"></div>
<div class="abs" style="left:1px;top:320px;width:1218px;height:39px;background:#eaf3fd;">
<div class="abs" style="left:0;top:0;width:149px;height:39px;background:#fafafa;background:#eaf3fd;"></div>
<div class="abs" style="left:149px;top:-1px;width:1px;height:41px;background:#e6e6e6"></div>
<div class="abs" style="left:389px;top:-1px;width:1px;height:41px;background:#e6e6e6"></div>
<div class="ctx" style="left:9px;top:9px">订/押金设置</div>
<div class="ctx" style="left:158px;top:9px">开台收订金</div>
<div class="abs" style="left:-1px;top:0px;width:1220px;height:40px"><div class="tw" style="left:399px;top:9px"></div></div>
</div>
<div class="abs" style="left:1px;top:359px;width:1218px;height:1px;background:#e6e6e6"></div>
<div class="abs" style="left:1px;top:360px;width:1218px;height:39px;">
<div class="abs" style="left:0;top:0;width:149px;height:39px;background:#fafafa;"></div>
<div class="abs" style="left:149px;top:-1px;width:1px;height:41px;background:#e6e6e6"></div>
<div class="abs" style="left:389px;top:-1px;width:1px;height:41px;background:#e6e6e6"></div>
<div class="ctx" style="left:9px;top:9px">订/押金设置</div>
<div class="ctx" style="left:158px;top:9px">押金</div>
<div class="abs" style="left:-1px;top:0px;width:1220px;height:40px"><div class="tw" style="left:399px;top:9px"></div><div class="ctx gray" style="left:455px">启用时，可进行押金收取</div><div class="inp" style="left:621px;top:6px;width:200px">按订单收取</div><div class="abs" style="left:801px;top:17px"><svg width="11" height="6" viewBox="0 0 12 7"><path d="M1 1 L6 6 L11 1" fill="none" stroke="#444" stroke-width="1.3"/></svg></div><div class="inp" style="left:833px;top:6px;width:120px">10.00</div><div class="ctx " style="left:965px">元</div></div>
</div>
<div class="abs" style="left:1px;top:399px;width:1218px;height:1px;background:#e6e6e6"></div>
<div class="abs" style="left:1px;top:400px;width:1218px;height:39px;">
<div class="abs" style="left:0;top:0;width:149px;height:39px;background:#fafafa;"></div>
<div class="abs" style="left:149px;top:-1px;width:1px;height:41px;background:#e6e6e6"></div>
<div class="abs" style="left:389px;top:-1px;width:1px;height:41px;background:#e6e6e6"></div>
<div class="ctx" style="left:9px;top:9px">订/押金设置</div>
<div class="ctx" style="left:158px;top:9px"><span style="font-size:13px;letter-spacing:-0.6px">POS</span>端操作订金退款</div>
<div class="abs" style="left:-1px;top:0px;width:1220px;height:40px"><div class="tw" style="left:399px;top:9px"></div><div class="ctx " style="left:455px">订单收款</div><div class="inp" style="left:523px;top:6px;width:120px">1</div><div class="ctx" style="left:621px;color:#444">天</div><div class="ctx " style="left:655px">后，不可在<span style="font-size:13px;letter-spacing:-0.6px">POS</span>端退订金</div></div>
</div>
<div class="abs" style="left:1px;top:439px;width:1218px;height:1px;background:#e6e6e6"></div>
<div class="abs" style="left:1px;top:440px;width:1218px;height:39px;">
<div class="abs" style="left:0;top:0;width:149px;height:39px;background:#fafafa;"></div>
<div class="abs" style="left:149px;top:-1px;width:1px;height:41px;background:#e6e6e6"></div>
<div class="abs" style="left:389px;top:-1px;width:1px;height:41px;background:#e6e6e6"></div>
<div class="ctx" style="left:9px;top:9px">订/押金设置</div>
<div class="ctx" style="left:158px;top:9px"><span style="font-size:13px;letter-spacing:-0.6px">POS</span>端操作押金退款</div>
<div class="abs" style="left:-1px;top:0px;width:1220px;height:40px"><div class="ctx " style="left:399px">押金单收款</div><div class="inp" style="left:481px;top:6px;width:120px">999</div><div class="ctx" style="left:579px;color:#444">天</div><div class="ctx " style="left:613px">后，不可在<span style="font-size:13px;letter-spacing:-0.6px">POS</span>端退押金</div></div>
</div>
<div class="abs" style="left:1px;top:479px;width:1218px;height:1px;background:#e6e6e6"></div>
<div class="abs" style="left:1px;top:480px;width:1218px;height:39px;">
<div class="abs" style="left:0;top:0;width:149px;height:39px;background:#fafafa;"></div>
<div class="abs" style="left:149px;top:-1px;width:1px;height:41px;background:#e6e6e6"></div>
<div class="abs" style="left:389px;top:-1px;width:1px;height:41px;background:#e6e6e6"></div>
<div class="ctx" style="left:9px;top:9px">寄存设置</div>
<div class="ctx" style="left:158px;top:9px">寄存取出短信验证</div>
<div class="abs" style="left:-1px;top:0px;width:1220px;height:40px"><div class="tw off" style="left:399px;top:9px"></div></div>
</div>
<div class="abs" style="left:1px;top:519px;width:1218px;height:1px;background:#e6e6e6"></div>
<div class="abs" style="left:1px;top:520px;width:1218px;height:39px;">
<div class="abs" style="left:0;top:0;width:149px;height:39px;background:#fafafa;"></div>
<div class="abs" style="left:149px;top:-1px;width:1px;height:41px;background:#e6e6e6"></div>
<div class="abs" style="left:389px;top:-1px;width:1px;height:41px;background:#e6e6e6"></div>
<div class="ctx" style="left:9px;top:9px">其他设置</div>
<div class="ctx" style="left:158px;top:9px">电子卡发卡默认卡类型</div>
<div class="abs" style="left:-1px;top:0px;width:1220px;height:40px"><div class="tw off" style="left:399px;top:9px"></div><div class="ctx " style="left:455px">启用时，门店注册时应用卡类型</div></div>
</div>
<div class="abs" style="left:1px;top:559px;width:1218px;height:1px;background:#e6e6e6"></div>
<div class="abs" style="left:1px;top:560px;width:1218px;height:39px;">
<div class="abs" style="left:0;top:0;width:149px;height:39px;background:#fafafa;"></div>
<div class="abs" style="left:149px;top:-1px;width:1px;height:41px;background:#e6e6e6"></div>
<div class="abs" style="left:389px;top:-1px;width:1px;height:41px;background:#e6e6e6"></div>
<div class="ctx" style="left:9px;top:9px">其他设置</div>
<div class="ctx" style="left:158px;top:9px">商品展示顺序</div>
<div class="abs" style="left:-1px;top:0px;width:1220px;height:40px"><div class="inp" style="left:399px;top:6px;width:200px">按总部设置顺序</div><div class="abs" style="left:579px;top:17px"><svg width="11" height="6" viewBox="0 0 12 7"><path d="M1 1 L6 6 L11 1" fill="none" stroke="#444" stroke-width="1.3"/></svg></div><div class="ctx gray" style="left:611px">门店按照总部的商品顺序展示</div></div>
</div>
<div class="abs" style="left:1px;top:599px;width:1218px;height:1px;background:#e6e6e6"></div>
<div class="abs" style="left:1px;top:600px;width:1218px;height:39px;">
<div class="abs" style="left:0;top:0;width:149px;height:39px;background:#fafafa;"></div>
<div class="abs" style="left:149px;top:-1px;width:1px;height:41px;background:#e6e6e6"></div>
<div class="abs" style="left:389px;top:-1px;width:1px;height:41px;background:#e6e6e6"></div>
<div class="ctx" style="left:9px;top:9px">其他设置</div>
<div class="ctx" style="left:158px;top:9px">商品类别排序</div>
<div class="abs" style="left:-1px;top:0px;width:1220px;height:40px"><div class="inp" style="left:399px;top:6px;width:200px">按总部设置顺序</div><div class="abs" style="left:579px;top:17px"><svg width="11" height="6" viewBox="0 0 12 7"><path d="M1 1 L6 6 L11 1" fill="none" stroke="#444" stroke-width="1.3"/></svg></div></div>
</div>
<div class="abs" style="left:1px;top:639px;width:1218px;height:1px;background:#e6e6e6"></div>
<div class="abs" style="left:1px;top:640px;width:1218px;height:39px;">
<div class="abs" style="left:0;top:0;width:149px;height:39px;background:#fafafa;"></div>
<div class="abs" style="left:149px;top:-1px;width:1px;height:41px;background:#e6e6e6"></div>
<div class="abs" style="left:389px;top:-1px;width:1px;height:41px;background:#e6e6e6"></div>
<div class="ctx" style="left:9px;top:9px">其他设置</div>
<div class="ctx" style="left:158px;top:9px">代客下单录入会员后默认支付方式</div>
<div class="abs" style="left:-1px;top:0px;width:1220px;height:40px"><div class="inp" style="left:399px;top:6px;width:200px"></div><div class="abs" style="left:579px;top:17px"><svg width="11" height="6" viewBox="0 0 12 7"><path d="M1 1 L6 6 L11 1" fill="none" stroke="#444" stroke-width="1.3"/></svg></div></div>
</div>
</div>
<div class="abs" style="left:662px;top:507px;width:1062px;height:166px;border:3px solid #ff1414;border-radius:4px"></div>
<div class="abs" style="left:212px;top:863px;width:1696px;height:40px;background:#f0f0f0;border-top:1px solid #dedede;border-radius:0 0 10px 10px"></div>
<div class="btn" style="left:988px;top:875px;width:56px;height:28px;border-radius:7px;letter-spacing:3px;text-indent:3px">保存</div>
<div class="btn" style="left:1052px;top:875px;width:80px;height:28px;border-radius:7px">历史记录</div>
<div class="wm" style="left:-301px;top:0px">别伟超9984744</div>
<div class="wm" style="left:-1px;top:0px">别伟超9984744</div>
<div class="wm" style="left:299px;top:0px">别伟超9984744</div>
<div class="wm" style="left:599px;top:0px">别伟超9984744</div>
<div class="wm" style="left:899px;top:0px">别伟超9984744</div>
<div class="wm" style="left:1199px;top:0px">别伟超9984744</div>
<div class="wm" style="left:1499px;top:0px">别伟超9984744</div>
<div class="wm" style="left:1799px;top:0px">别伟超9984744</div>
<div class="wm" style="left:2099px;top:0px">别伟超9984744</div>
<div class="wm" style="left:-151px;top:150px">别伟超9984744</div>
<div class="wm" style="left:149px;top:150px">别伟超9984744</div>
<div class="wm" style="left:449px;top:150px">别伟超9984744</div>
<div class="wm" style="left:749px;top:150px">别伟超9984744</div>
<div class="wm" style="left:1049px;top:150px">别伟超9984744</div>
<div class="wm" style="left:1349px;top:150px">别伟超9984744</div>
<div class="wm" style="left:1649px;top:150px">别伟超9984744</div>
<div class="wm" style="left:1949px;top:150px">别伟超9984744</div>
<div class="wm" style="left:2249px;top:150px">别伟超9984744</div>
<div class="wm" style="left:-301px;top:300px">别伟超9984744</div>
<div class="wm" style="left:-1px;top:300px">别伟超9984744</div>
<div class="wm" style="left:299px;top:300px">别伟超9984744</div>
<div class="wm" style="left:599px;top:300px">别伟超9984744</div>
<div class="wm" style="left:899px;top:300px">别伟超9984744</div>
<div class="wm" style="left:1199px;top:300px">别伟超9984744</div>
<div class="wm" style="left:1499px;top:300px">别伟超9984744</div>
<div class="wm" style="left:1799px;top:300px">别伟超9984744</div>
<div class="wm" style="left:2099px;top:300px">别伟超9984744</div>
<div class="wm" style="left:-151px;top:450px">别伟超9984744</div>
<div class="wm" style="left:149px;top:450px">别伟超9984744</div>
<div class="wm" style="left:449px;top:450px">别伟超9984744</div>
<div class="wm" style="left:749px;top:450px">别伟超9984744</div>
<div class="wm" style="left:1049px;top:450px">别伟超9984744</div>
<div class="wm" style="left:1349px;top:450px">别伟超9984744</div>
<div class="wm" style="left:1649px;top:450px">别伟超9984744</div>
<div class="wm" style="left:1949px;top:450px">别伟超9984744</div>
<div class="wm" style="left:2249px;top:450px">别伟超9984744</div>
<div class="wm" style="left:-301px;top:600px">别伟超9984744</div>
<div class="wm" style="left:-1px;top:600px">别伟超9984744</div>
<div class="wm" style="left:299px;top:600px">别伟超9984744</div>
<div class="wm" style="left:599px;top:600px">别伟超9984744</div>
<div class="wm" style="left:899px;top:600px">别伟超9984744</div>
<div class="wm" style="left:1199px;top:600px">别伟超9984744</div>
<div class="wm" style="left:1499px;top:600px">别伟超9984744</div>
<div class="wm" style="left:1799px;top:600px">别伟超9984744</div>
<div class="wm" style="left:2099px;top:600px">别伟超9984744</div>
<div class="wm" style="left:-151px;top:750px">别伟超9984744</div>
<div class="wm" style="left:149px;top:750px">别伟超9984744</div>
<div class="wm" style="left:449px;top:750px">别伟超9984744</div>
<div class="wm" style="left:749px;top:750px">别伟超9984744</div>
<div class="wm" style="left:1049px;top:750px">别伟超9984744</div>
<div class="wm" style="left:1349px;top:750px">别伟超9984744</div>
<div class="wm" style="left:1649px;top:750px">别伟超9984744</div>
<div class="wm" style="left:1949px;top:750px">别伟超9984744</div>
<div class="wm" style="left:2249px;top:750px">别伟超9984744</div>
<div class="wm" style="left:-301px;top:900px">别伟超9984744</div>
<div class="wm" style="left:-1px;top:900px">别伟超9984744</div>
<div class="wm" style="left:299px;top:900px">别伟超9984744</div>
<div class="wm" style="left:599px;top:900px">别伟超9984744</div>
<div class="wm" style="left:899px;top:900px">别伟超9984744</div>
<div class="wm" style="left:1199px;top:900px">别伟超9984744</div>
<div class="wm" style="left:1499px;top:900px">别伟超9984744</div>
<div class="wm" style="left:1799px;top:900px">别伟超9984744</div>
<div class="wm" style="left:2099px;top:900px">别伟超9984744</div>
</body></html>
